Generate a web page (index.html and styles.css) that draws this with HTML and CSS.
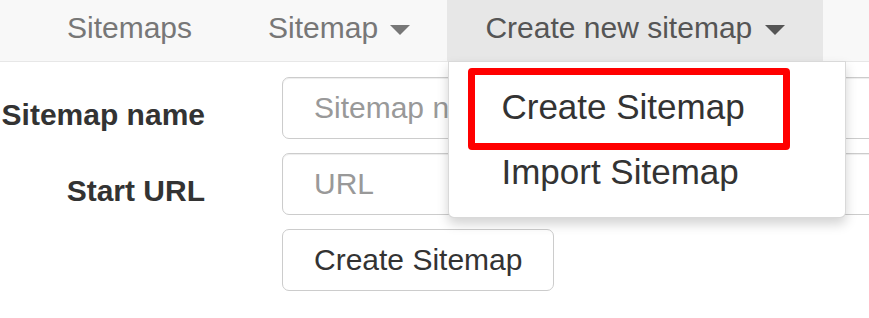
FILE: index.html
```html
<!DOCTYPE html>
<html lang="en">
<head>
  <meta charset="UTF-8">
  <title>Web Scraper - Create new sitemap</title>
  <link rel="stylesheet" href="styles.css">
</head>
<body>
  <!-- Topp-navigasjon -->
  <nav class="navbar">
    <ul class="nav">
      <li><a href="#">Sitemaps</a></li>
      <li><a href="#">Sitemap <span class="caret"></span></a></li>
      <li class="dropdown open">
        <a href="#">Create new sitemap <span class="caret"></span></a>
        <ul class="dropdown-menu">
          <li><a href="#" class="marked">Create Sitemap</a></li>
          <li><a href="#" class="plain">Import Sitemap</a></li>
        </ul>
      </li>
    </ul>
  </nav>

  <!-- Skjema -->
  <form class="sitemap-form">
    <div class="form-row">
      <label for="sitemapName">Sitemap name</label>
      <input id="sitemapName" type="text" placeholder="Sitemap name">
    </div>
    <div class="form-row">
      <label for="startUrl">Start URL</label>
      <input id="startUrl" type="text" placeholder="URL">
    </div>
    <div class="form-row">
      <span></span>
      <div><button type="button">Create Sitemap</button></div>
    </div>
  </form>
</body>
</html>
```

FILE: styles.css
```css
/* Generelle stiler */
* { box-sizing: border-box; }
html, body { overflow: hidden; }
body {
  margin: 0;
  font-family: 'Liberation Sans', Arial, sans-serif;
  font-size: 30px;
  color: #333;
  background-color: #fff;
}
/* Navigasjon */
.navbar {
  height: 62px;
  background-color: #f8f8f8;
  border-bottom: 1px solid #e7e7e7;
}
.nav {
  display: flex;
  margin: 0;
  padding: 0 0 0 29px;
  list-style: none;
}
.nav > li { position: relative; }
.nav > li > a {
  display: block;
  height: 61px;
  line-height: 56px;
  padding: 0 38px;
  color: #777;
  text-decoration: none;
}
.nav > li:nth-child(2) > a { padding-right: 37px; }
.nav > li.open > a {
  background-color: #e7e7e7;
  color: #555;
}
.caret {
  display: inline-block;
  width: 0;
  height: 0;
  margin-left: 4px;
  vertical-align: 3px;
  border-top: 10px solid;
  border-left: 10px solid transparent;
  border-right: 10px solid transparent;
}
/* Nedtrekksmeny */
.dropdown-menu {
  position: absolute;
  top: 100%;
  left: 1px;
  z-index: 10;
  width: 398px;
  margin: 0;
  padding: 6px 0 23px;
  list-style: none;
  font-size: 35px;
  background-color: #fff;
  border: 1px solid rgba(0,0,0,0.15);
  border-radius: 0 0 6px 6px;
  box-shadow: 0 6px 12px rgba(0,0,0,0.175);
}
.dropdown-menu a {
  display: block;
  color: #333;
  text-decoration: none;
  white-space: nowrap;
}
.dropdown-menu .marked {
  margin: 0 55px 0 19px;
  padding: 0 0 4px 26px;
  line-height: 64px;
  border: 7px solid #ff0000;
  border-radius: 4px;
}
.dropdown-menu .plain {
  padding-left: 52px;
  line-height: 44px;
}
/* Skjema */
.sitemap-form {
  margin-top: 15px;
}
.form-row {
  display: grid;
  grid-template-columns: 205px 1fr;
  column-gap: 77px;
  margin-bottom: 14px;
}
.form-row label {
  height: 62px;
  padding-top: 14px;
  line-height: 48px;
  font-weight: bold;
  text-align: right;
  white-space: nowrap;
}
.form-row input {
  width: 640px;
  height: 62px;
  padding: 0 31px;
  font: inherit;
  color: #555;
  border: 1px solid #ccc;
  border-radius: 7px;
  box-shadow: inset 0 1px 1px rgba(0,0,0,0.075);
}
.form-row input::placeholder { color: #999; }
button {
  height: 62px;
  padding: 0 31px;
  font: inherit;
  color: #333;
  background-color: #fff;
  border: 1px solid #ccc;
  border-radius: 7px;
}
```
